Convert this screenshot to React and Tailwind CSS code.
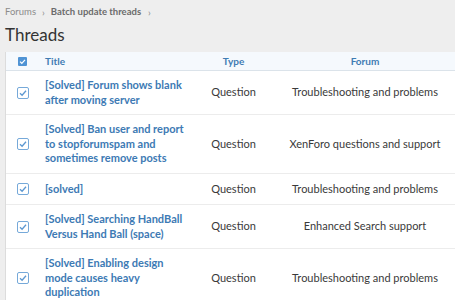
import React from 'react';

const rows = [
    { title: '[Solved] Forum shows blank after moving server', forum: 'Troubleshooting and problems' },
    { title: '[Solved] Ban user and report to stopforumspam and sometimes remove posts', forum: 'XenForo questions and support' },
    { title: '[solved]', forum: 'Troubleshooting and problems' },
    { title: '[Solved] Searching HandBall Versus Hand Ball (space)', forum: 'Enhanced Search support' },
    { title: '[Solved] Enabling design mode causes heavy duplication', forum: 'Troubleshooting and problems' },
];

function Check({ filled }) {
    if (filled) {
        return (
            <svg width="9" height="9" viewBox="0 0 9 9">
                <rect x="0" y="0" width="9" height="9" rx="1" fill="#4f93d4" />
                <path d="M2 4.6 L3.8 6.3 L7 2.8" fill="none" stroke="#fff" strokeWidth="1.2" />
            </svg>
        );
    }
    return (
        <svg width="12" height="12" viewBox="0 0 12 12">
            <rect x="0.5" y="0.5" width="11" height="11" rx="1.5" fill="#fff" stroke="#76a9d9" />
            <path d="M3 6.2 L5.1 8.2 L9 3.8" fill="none" stroke="#5d98d1" strokeWidth="1.3" />
        </svg>
    );
}

export default function App() {
    return (
        <div className="w-[455px] h-[300px] overflow-hidden bg-[#eeeeee] text-[#333]" style={{ fontFamily: 'Lato, "Open Sans", sans-serif' }}>
            <div className="px-[5px] pt-[4px]">
                {/* Breadcrumb */}
                <div className="flex items-center h-[16px] text-[9.5px]">
                    <span className="text-[#8c8c8c]">Forums</span>
                    <span className="text-[#8c8c8c] mx-[6px] text-[10px]">›</span>
                    <span className="font-bold text-[#6b6b6b]">Batch update threads</span>
                    <span className="text-[#8c8c8c] ml-[7px] text-[10px]">›</span>
                </div>
                <h1 className="text-[17px] leading-[22px] mt-[4px] mb-[6px] text-[#333]">Threads</h1>

                <div className="w-[460px] bg-white border-l border-[#dcdcdc]">
                    <div className="grid grid-cols-[32px_162px_67px_196px] h-[19px] items-center bg-[#f5f9fd] border-b border-[#dbe3ea] text-[10px] font-bold text-[#3f7cb3]">
                        <div className="flex justify-center pl-[1px]"><Check filled /></div>
                        <div className="pl-[7px]">Title</div>
                        <div className="text-center">Type</div>
                        <div className="text-center">Forum</div>
                    </div>
                    {rows.map((r, i) => (
                        <div key={i} className="grid grid-cols-[32px_162px_67px_196px] items-center border-b border-[#ececec] py-[7px]">
                            <div className="flex justify-center pl-[1px]"><Check /></div>
                            <div className="pl-[7px] pr-[11px] text-[11px] leading-[14.5px] font-bold text-[#3d7ab4]">{r.title}</div>
                            <div className="text-center text-[11px] text-[#3a3a3a]">Question</div>
                            <div className="text-center text-[11px] text-[#3a3a3a]">{r.forum}</div>
                        </div>
                    ))}
                </div>
            </div>
        </div>
    );
}
